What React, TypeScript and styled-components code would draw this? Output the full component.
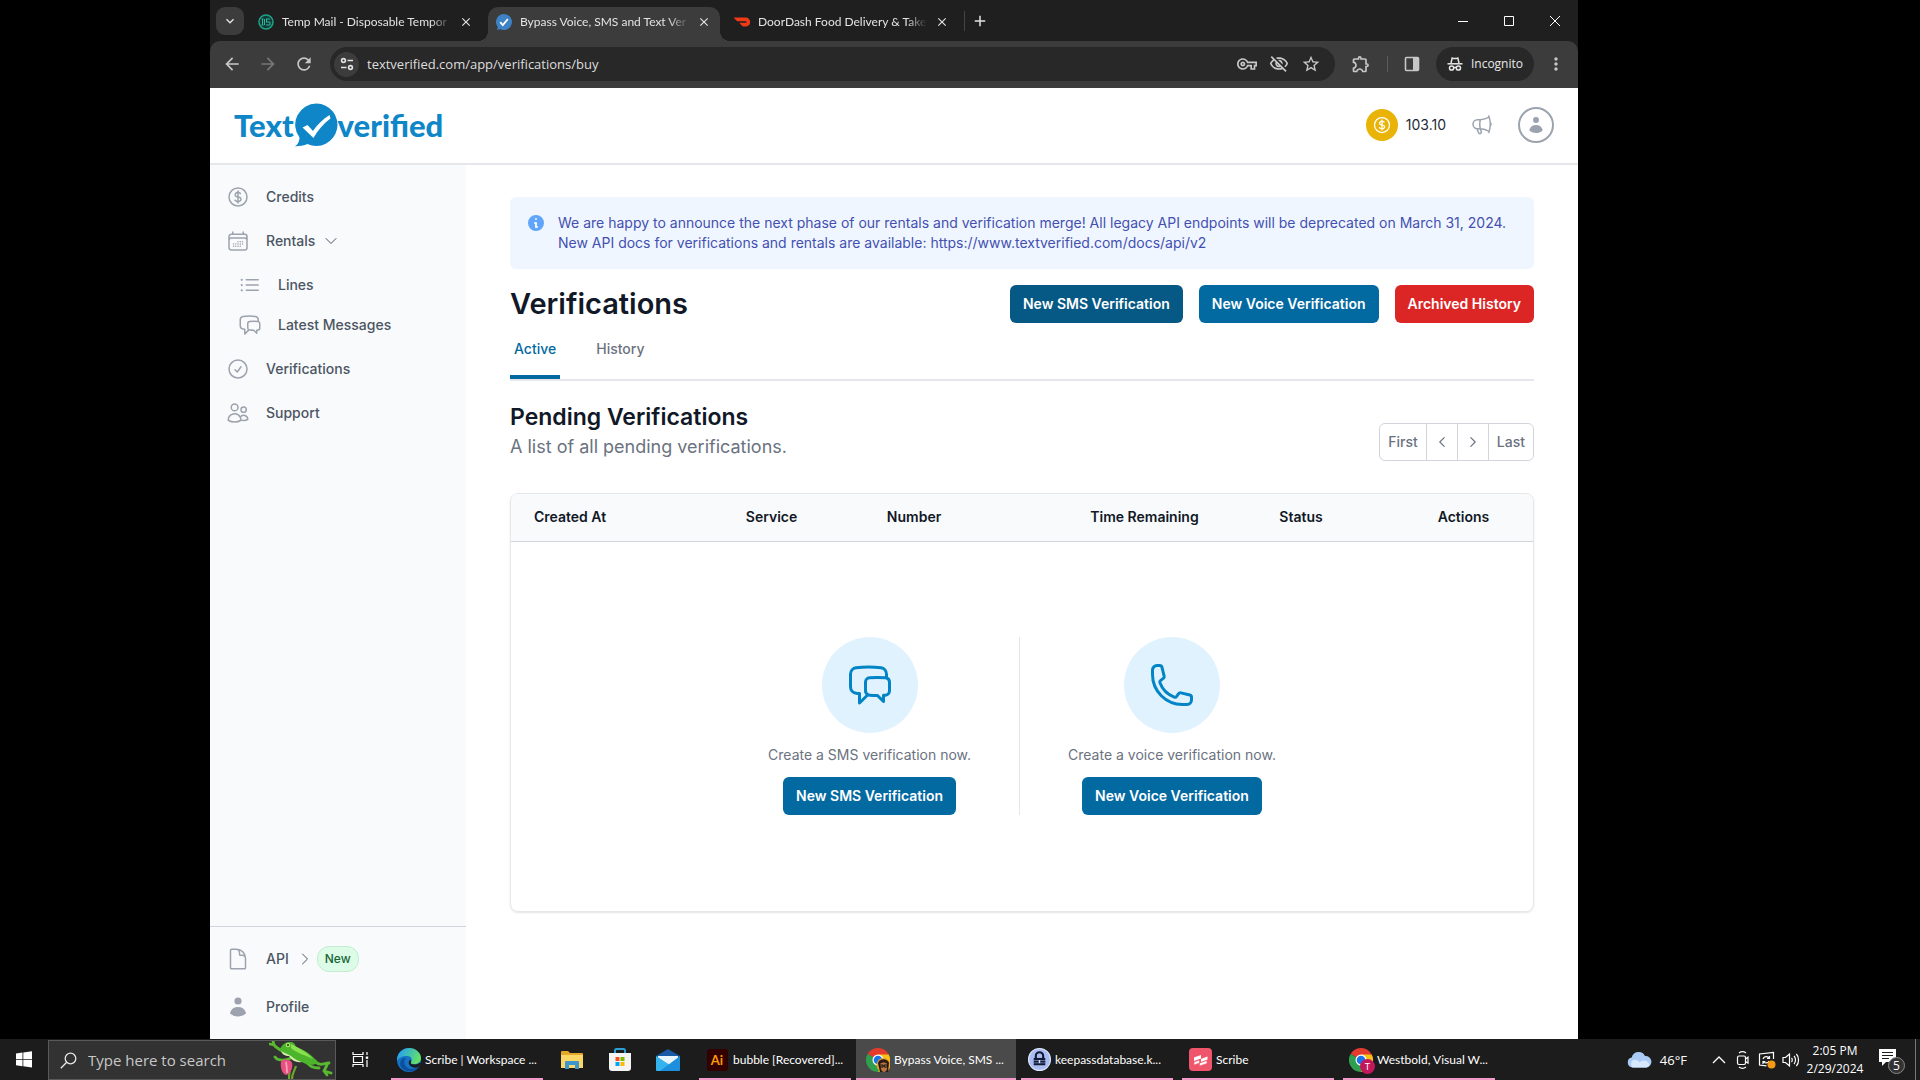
import React, { useState } from 'react';
import styled, { createGlobalStyle, css } from 'styled-components';
import {
  HiOutlineCalendarDays,
  HiOutlineChatBubbleLeftRight,
  HiOutlineCheckCircle,
  HiOutlineChevronDown,
  HiOutlineChevronLeft,
  HiOutlineChevronRight,
  HiOutlineCurrencyDollar,
  HiOutlineDocument,
  HiOutlineListBullet,
  HiOutlineMegaphone,
  HiOutlinePhone,
  HiOutlineUsers,
} from 'react-icons/hi2';
import { HiInformationCircle } from 'react-icons/hi';
import {
  MdArrowBack,
  MdArrowForward,
  MdClose,
  MdAdd,
  MdKeyboardArrowDown,
  MdMoreVert,
  MdOutlineExtension,
  MdOutlineVisibilityOff,
  MdOutlineVpnKey,
  MdRefresh,
  MdStarBorder,
} from 'react-icons/md';

const GlobalStyle = createGlobalStyle`
  * {
    box-sizing: border-box;
  }
  body {
    margin: 0;
    background: #000;
    font-family: Inter, 'Liberation Sans', sans-serif;
    font-size: 14px;
    line-height: 20px;
  }
  button, input {
    font: inherit;
    color: inherit;
    margin: 0;
    padding: 0;
    border: 0;
    background: none;
  }
  button {
    cursor: pointer;
  }
  a {
    color: inherit;
    text-decoration: none;
  }
  h1, h2, p {
    margin: 0;
  }
  svg {
    display: block;
    flex-shrink: 0;
  }
`;

const Desktop = styled.div`
  min-height: 100vh;
  display: flex;
  flex-direction: column;
`;

const Screen = styled.div`
  flex: 1;
  display: flex;
  flex-direction: column;
  padding: 0 342px 0 210px;
`;

/* ---------- browser ---------- */

const BrowserTop = styled.div`
  background: #1f1f1f;
`;

const TabStrip = styled.div`
  height: 41px;
  display: flex;
  align-items: flex-end;
  color: #e3e3e3;
  font-family: Lato, 'Open Sans', sans-serif;
  font-size: 12px;
`;

const TabSearch = styled.button`
  width: 28px;
  height: 28px;
  margin: 0 6px;
  align-self: center;
  display: grid;
  place-items: center;
  border-radius: 9px;
  background: #3c3c3c;
`;

const BrowserTab = styled.div<{ $active?: boolean }>`
  position: relative;
  width: 232px;
  height: 34px;
  margin-right: 6px;
  padding: 0 9px 4px 8px;
  display: flex;
  align-items: center;
  gap: 8px;
  border-radius: 10px 10px 0 0;
  ${({ $active }) =>
    $active &&
    css`
      background: #3c3c3c;
      &::before,
      &::after {
        content: '';
        position: absolute;
        bottom: 0;
        width: 10px;
        height: 10px;
      }
      &::before {
        left: -10px;
        background: radial-gradient(circle at 0 0, transparent 10px, #3c3c3c 10px);
      }
      &::after {
        right: -10px;
        background: radial-gradient(circle at 100% 0, transparent 10px, #3c3c3c 10px);
      }
    `}
`;

const BrowserTabTitle = styled.span`
  flex: 1;
  white-space: nowrap;
  mask-image: linear-gradient(to right, #000 88%, transparent);
`;

const PlainButton = styled.button`
  display: grid;
  place-items: center;
`;

const NewTab = styled(PlainButton)`
  height: 20px;
  margin-bottom: 10px;
  padding-left: 6px;
  border-left: 1px solid #444;
`;

const WindowButtons = styled.div`
  margin-left: auto;
  height: 41px;
  display: flex;
  color: #fff;
  button {
    width: 46px;
  }
`;

const Toolbar = styled.div`
  height: 47px;
  display: flex;
  align-items: center;
  padding: 0 12px 1px;
  gap: 16px;
  border-radius: 10px 10px 0 0;
  background: #3c3c3c;
  color: #c7c7c7;
  font-family: 'Open Sans', 'Noto Sans', sans-serif;
`;

const Omnibox = styled.label`
  flex: 1;
  height: 34px;
  padding: 0 14px 0 4px;
  display: flex;
  align-items: center;
  gap: 12px;
  border-radius: 17px;
  background: #282828;
  input {
    flex: 1;
    min-width: 0;
    outline: none;
    color: #dedede;
    font-size: 13px;
  }
`;

const SiteInfo = styled.span`
  width: 25px;
  height: 25px;
  margin-right: -4px;
  display: grid;
  place-items: center;
  border-radius: 50%;
  background: #3c3c3c;
`;

const Separator = styled.span`
  width: 1px;
  height: 16px;
  background: #5c5c5c;
`;

const Incognito = styled.button`
  height: 34px;
  margin-right: -4px;
  padding: 0 11px;
  display: flex;
  align-items: center;
  gap: 8px;
  border-radius: 17px;
  background: #282828;
  color: #e8e8e8;
  font-size: 12px;
`;

/* ---------- site ---------- */

const Site = styled.div`
  flex: 1;
  display: flex;
  flex-direction: column;
  background: #fff;
`;

const SiteHeader = styled.header`
  height: 77px;
  padding: 0 24px 1px;
  display: flex;
  align-items: center;
  justify-content: space-between;
  border-bottom: 2px solid #e5e7eb;
`;

const Logo = styled.a`
  display: flex;
  align-items: center;
  color: #0e86c8;
  font-family: Lato, sans-serif;
  font-size: 31px;
  font-weight: 900;
  line-height: 44px;
`;

const HeaderActions = styled.div`
  display: flex;
  align-items: center;
  gap: 24px;
  color: #9ca3af;
`;

const Balance = styled.div`
  display: flex;
  align-items: center;
  gap: 8px;
  color: #1f2937;
`;

const Coin = styled.span`
  width: 32px;
  height: 32px;
  display: grid;
  place-items: center;
  border-radius: 50%;
  background: #eab308;
  color: #fff;
`;

const Avatar = styled.button`
  width: 36px;
  height: 36px;
  display: grid;
  place-items: center;
  border: 2px solid #9ca3af;
  border-radius: 50%;
`;

const SiteBody = styled.div`
  flex: 1;
  display: flex;
`;

const Sidebar = styled.nav`
  width: 256px;
  display: flex;
  flex-direction: column;
  justify-content: space-between;
  background: #f9fafb;
  color: #4b5563;
  font-weight: 500;
`;

const NavGroup = styled.div`
  display: flex;
  flex-direction: column;
  padding: 10px 16px;
`;

const NavFooter = styled(NavGroup)`
  padding: 8px 16px;
  border-top: 1px solid #d1d5db;
`;

const NavItem = styled.a<{ $nested?: boolean; $tall?: boolean }>`
  height: ${({ $nested, $tall }) => ($tall ? 48 : $nested ? 40 : 44)}px;
  padding-left: ${({ $nested }) => ($nested ? 12 : 0)}px;
  display: flex;
  align-items: center;
  gap: 16px;
  > svg {
    color: #9ca3af;
  }
`;

const NavSub = styled.div`
  padding: 2px 0;
`;

const NavLabel = styled.span`
  display: flex;
  align-items: center;
  gap: 4px;
  svg {
    margin-left: 4px;
  }
`;

const NewBadge = styled.span`
  padding: 1px 7px;
  border: 1px solid #c3ecd1;
  border-radius: 12px;
  background: #dcfce7;
  color: #166534;
  font-size: 12px;
  line-height: 22px;
`;

const Main = styled.main`
  flex: 1;
  min-width: 0;
  padding: 32px 44px;
`;

const Notice = styled.div`
  display: flex;
  gap: 12px;
  padding: 16px;
  border-radius: 6px;
  background: #eff6ff;
  color: #4450b0;
  > svg {
    color: #60a5fa;
  }
`;

const TitleRow = styled.div`
  display: flex;
  align-items: center;
  justify-content: space-between;
  padding-top: 16px;
`;

const Title = styled.h1`
  color: #111827;
  font-size: 29px;
  font-weight: 600;
  line-height: 36px;
`;

const ButtonRow = styled.div`
  display: flex;
  gap: 16px;
`;

const tones = {
  blue: '#0369a1',
  deep: '#075985',
  red: '#dc2626',
};

const ActionButton = styled.button<{ $tone?: keyof typeof tones }>`
  height: 38px;
  padding: 0 13px;
  border-radius: 6px;
  background: ${({ $tone = 'blue' }) => tones[$tone]};
  color: #fff;
  font-weight: 600;
  white-space: nowrap;
`;

const Tabs = styled.div`
  display: flex;
  gap: 32px;
  border-bottom: 2px solid #e5e7eb;
`;

const Tab = styled.button<{ $active: boolean }>`
  height: 56px;
  padding: 0 4px;
  border-bottom: 4px solid transparent;
  color: #6b7280;
  font-weight: 500;
  ${({ $active }) =>
    $active &&
    css`
      border-color: #0369a1;
      color: #0369a1;
    `}
`;

const SectionHead = styled.div`
  display: flex;
  align-items: flex-end;
  justify-content: space-between;
  padding: 20px 0 32px;
`;

const SectionTitle = styled.h2`
  color: #111827;
  font-size: 23px;
  font-weight: 600;
  line-height: 32px;
`;

const SectionText = styled.p`
  color: #6b7280;
  font-size: 18px;
  line-height: 28px;
`;

const Pager = styled.div`
  display: flex;
  height: 38px;
  border: 1px solid #d1d5db;
  border-radius: 6px;
  color: #6b7280;
  font-weight: 500;
  button {
    display: grid;
    place-items: center;
    padding: 0 8px;
  }
  button + button {
    border-left: 1px solid #d1d5db;
  }
`;

const TableCard = styled.div`
  overflow: hidden;
  border: 1px solid #e5e7eb;
  border-radius: 8px;
  box-shadow: 0 1px 2px rgba(0, 0, 0, 0.1);
`;

const Table = styled.table`
  width: 100%;
  table-layout: fixed;
  border-collapse: collapse;
`;

const HeadCell = styled.th<{ $width?: string }>`
  width: ${({ $width = 'auto' }) => $width};
  height: 47px;
  padding: 0 10px;
  border-bottom: 1px solid #d1d5db;
  background: #f9fafb;
  color: #111827;
  font-weight: 600;
  text-align: left;
  &:first-child {
    padding-left: 23px;
  }
`;

const EmptyCell = styled.td`
  height: 370px;
  padding: 0;
`;

const EmptyState = styled.div`
  display: flex;
  justify-content: center;
`;

const EmptyOption = styled.div`
  padding: 0 48px;
  display: flex;
  flex-direction: column;
  align-items: center;
  gap: 12px;
  color: #6b7280;
  & + & {
    border-left: 1px solid #e5e7eb;
  }
`;

const IconDisc = styled.div`
  width: 96px;
  height: 96px;
  display: grid;
  place-items: center;
  border-radius: 50%;
  background: #e0f2fe;
  color: #0284c7;
`;

/* ---------- taskbar ---------- */

const Taskbar = styled.footer`
  height: 41px;
  display: flex;
  align-items: stretch;
  background: #1c1c1c;
  color: #fff;
  font-family: 'Open Sans', 'Noto Sans', sans-serif;
  font-size: 12px;
`;

const TaskIcon = styled.button<{ $width?: number }>`
  width: ${({ $width = 48 }) => $width}px;
  display: grid;
  place-items: center;
`;

const TaskSearch = styled.label`
  width: 288px;
  margin-top: 1px;
  padding-left: 11px;
  display: flex;
  align-items: center;
  gap: 11px;
  border: 1px solid #5a5a5a;
  background: #323232;
  input {
    flex: 1;
    min-width: 0;
    outline: none;
    font-size: 15px;
  }
  input::placeholder {
    color: #c8c8c8;
    opacity: 1;
  }
`;

const TaskApps = styled.div`
  display: flex;
  margin-left: 7px;
  margin-right: auto;
  font-family: Lato, 'Open Sans', sans-serif;
`;

const TaskApp = styled.button<{ $active?: boolean }>`
  width: ${({ $active }) => ($active ? 160 : 152)}px;
  margin: ${({ $active }) => ($active ? '0 5px 0 -4px' : '0 9px 0 0')};
  padding: 2px 0 0 ${({ $active }) => ($active ? 10 : 6)}px;
  display: grid;
  grid-template-columns: 24px 1fr;
  align-items: center;
  gap: 4px;
  border-bottom: 2px solid #f29bcb;
  background: ${({ $active }) => ($active ? '#4a4a4a' : 'transparent')};
  text-align: left;
  white-space: nowrap;
  > svg, > b {
    justify-self: center;
  }
`;

const PinnedApps = styled.div`
  display: flex;
  margin: 0 7px 0 -4px;
`;

const Tray = styled.div`
  display: flex;
  align-items: center;
`;

const Weather = styled.button`
  display: flex;
  align-items: center;
  gap: 8px;
  margin-right: 20px;
  font-size: 13px;
`;

const Clock = styled.div`
  width: 64px;
  text-align: center;
  line-height: 18px;
`;

const ShowDesktop = styled.button`
  align-self: stretch;
  width: 5px;
  border-left: 1px solid #777;
`;

/* ---------- drawings ---------- */

const LogoMark = () => (
  <svg width="44" height="44" viewBox="0 0 44 44">
    <path
      d="M22.5.5a21.2 21.2 0 1 1-9 40.5C10.500 42.5 5 43 1 43.5 4.500 41 5.500 37.5 5.500 34.5A21.200 21.200 0 0 1 22.5.5z"
      fill="#0e86c8"
    />
    <path d="M8.500 24.500l5-2.500 5.500 6C23 22 28.500 16.500 35.500 12l1 3.500C29.500 20.500 24 27 19.500 35z" fill="#fff" />
  </svg>
);

const UserIcon = ({ size }: { size: number }) => (
  <svg width={size} height={size} viewBox="0 0 20 20" fill="currentColor">
    <path d="M10 8a3 3 0 1 0 0-6 3 3 0 0 0 0 6zM3.465 14.493a1.230 1.230 0 0 0 .41 1.412A9.957 9.957 0 0 0 10 18c2.310 0 4.438-.784 6.131-2.100.43-.333.604-.903.408-1.410a7.002 7.002 0 0 0-13.074.003z" />
  </svg>
);

const TempMailIcon = () => (
  <svg width="16" height="16" viewBox="0 0 16 16">
    <circle cx="8" cy="8" r="7" fill="#123b38" stroke="#1fa387" strokeWidth="1.5" />
    <path d="M4.5 5v6M3.5 5h2M3.500 11h2M6.500 5v6M8 5h4M8 8h4M8 11h4M12 8v3M8.500 5v3" stroke="#2db598" fill="none" />
  </svg>
);

const VerifiedIcon = () => (
  <svg width="16" height="16" viewBox="0 0 16 16">
    <path d="M8 0a8 8 0 1 1-3.500 15.200L.8 15.800 1.800 13A8 8 0 0 1 8 0z" fill="#3c82c4" />
    <path d="M4.200 8.200l2.600 3 5-6" stroke="#fff" strokeWidth="1.8" fill="none" />
  </svg>
);

const DoorDashIcon = () => (
  <svg width="16" height="16" viewBox="0 0 24 24">
    <path
      d="M23.100 8.500A5.700 5.700 0 0 0 18 5.400H.6a.6.600 0 0 0-.4 1L4 10.200c.3.300.8.500 1.300.5h12.200a1.300 1.300 0 1 1 0 2.600H9.100a.6.600 0 0 0-.4 1l3.800 3.800c.3.300.8.500 1.200.5h3.900c5 0 8.800-5.200 5.500-10.100"
      fill="#f03a17"
    />
  </svg>
);

const TuneIcon = () => (
  <svg width="16" height="16" viewBox="0 0 16 16" fill="none" stroke="#e3e3e3" strokeWidth="1.6">
    <circle cx="4.5" cy="4.5" r="1.9" />
    <path d="M8.500 4.500h5.500M2 11.500h5.500" />
    <circle cx="11.5" cy="11.5" r="1.9" />
  </svg>
);

const SidePanelIcon = () => (
  <svg width="16" height="16" viewBox="0 0 16 16">
    <rect x="1.5" y="1.5" width="13" height="13" rx="1" fill="none" stroke="#c7c7c7" strokeWidth="1.6" />
    <path d="M9 1.500h5.500v13H9z" fill="#c7c7c7" />
  </svg>
);

const IncognitoIcon = () => (
  <svg width="16" height="16" viewBox="0 0 16 16" fill="none" stroke="#e8e8e8" strokeWidth="1.5">
    <path d="M4 7l1.200-5 1.600.6h2.400l1.600-.6L12 7" />
    <path d="M.5 7.800h15" />
    <circle cx="4.6" cy="12" r="2.1" />
    <circle cx="11.4" cy="12" r="2.1" />
    <path d="M6.700 11.500h2.600" />
  </svg>
);

const MinimizeIcon = () => (
  <svg width="10" height="10" viewBox="0 0 10 10"><path d="M0 5.500h10" stroke="#fff" /></svg>
);

const MaximizeIcon = () => (
  <svg width="10" height="10" viewBox="0 0 10 10"><path d="M.5.5h9v9h-9z" stroke="#fff" fill="none" /></svg>
);

const CloseIcon = () => (
  <svg width="10" height="10" viewBox="0 0 10 10"><path d="M0 0l10 10M10 0L0 10" stroke="#fff" /></svg>
);

const WindowsIcon = () => (
  <svg width="16" height="17" viewBox="0 0 16 17" fill="#fff">
    <path d="M0 2.500L6.500 1.600V8H0zM7.300 1.500L16 .3V8H7.300zM0 8.800h6.500v6.400L0 14.300zM7.300 8.800H16v7.700l-8.700-1.200z" />
  </svg>
);

const SearchIcon = () => (
  <svg width="17" height="17" viewBox="0 0 17 17" fill="none" stroke="#e8e8e8" strokeWidth="1.3">
    <circle cx="10.5" cy="6.5" r="5.3" />
    <path d="M6.700 10.300L.8 16.200" />
  </svg>
);

const FrogIcon = () => (
  <svg width="66" height="38" viewBox="0 0 66 38">
    <path d="M20 38c0-6 1-9 1-12M23 38c0-6 3-9 4-13" stroke="#6fa52c" strokeWidth="2.2" fill="none" />
    <path
      d="M20 12C15 11 9 9 4 3M5 4L1 3M5 4L4 0M22 17c-4 2-9 3-14 1M8 18l-2-2M46 20c5 6 9 2 14 2M59 22l-4 8M55 30l7 2M55 30l3 4M36 20c6 6 8 7 14 7"
      stroke="#58b830"
      strokeWidth="2.8"
      fill="none"
      strokeLinecap="round"
      strokeLinejoin="round"
    />
    <path d="M12 21c1-3 5-3 7-2 4 0 5 4 4 8-1 4-4 7-6 7-4-1-6-8-5-13z" fill="#e8507f" />
    <path d="M17 21c1 5 1 8 1 11" stroke="#f9a0bb" strokeWidth="1.8" fill="none" />
    <path d="M11 8c2-4 5-7 10-7 4 0 5 2 6 5 7 2 17 8 22 16-5 3-11 2-16-1-5-1-9-2-13-7-4 0-8-2-9-6z" fill="#4db52b" />
    <path d="M22 3c8 4 16 8 22 15-8-4-17-6-22-11z" fill="#8be04f" />
    <path d="M12 10c3 2 7 3 10 5 3 3 7 5 11 6-5 1-10-1-13-6-4 0-7-2-8-5z" fill="#d5efb0" />
    <circle cx="19" cy="4" r="2.3" fill="#a8e667" />
    <circle cx="19" cy="4" r="1" fill="#1d3311" />
  </svg>
);

const TaskViewIcon = () => (
  <svg width="17" height="17" viewBox="0 0 17 17" fill="none" stroke="#fff" strokeWidth="1.2">
    <path d="M1 1v2.500h10V1M1 16v-2.500h10V16M1.500 5.500h9v6h-9zM15 1v3M15 9v7" />
    <path d="M13.800 5.500h2.400v2.400h-2.400z" fill="#fff" stroke="none" />
  </svg>
);

const EdgeIcon = () => (
  <svg width="24" height="24" viewBox="0 0 24 24">
    <defs>
      <linearGradient id="edgeTop" x1="0" y1="0" x2="1" y2="0.4">
        <stop offset="0.2" stopColor="#2aa6e8" />
        <stop offset="1" stopColor="#62df6a" />
      </linearGradient>
    </defs>
    <circle cx="12" cy="12" r="12" fill="#1473c8" />
    <path d="M0 11C1 4 6 0 12 0c7 0 12 5 12 10 0 4-3 6-7 6-3 0-4-1-3-2 2-3 0-6-4-6-5 0-9 2-10 5z" fill="url(#edgeTop)" />
    <path d="M9 10c-4 4-1 11 6 11 3 0 5-1 7-3-3 5-8 6-12 5C4 22 1 15 5 11c1-1 3-1 4-1z" fill="#0c4f9c" />
    <path d="M14 14c-1 1 0 2.500 3 2.500 2.500 0 4.500-.5 6-2l1 1-2.500 3.500c-5 2-11-1-9.500-6 .5-1.500 3-1 2 1z" fill="#1c1c1c" />
  </svg>
);

const ExplorerIcon = () => (
  <svg width="22" height="20" viewBox="0 0 22 20">
    <path d="M0 2a1 1 0 0 1 1-1h6l2 2h12a1 1 0 0 1 1 1v14H0z" fill="#e3a72a" />
    <path d="M0 5h22v12a1 1 0 0 1-1 1H1a1 1 0 0 1-1-1z" fill="#fbd768" />
    <path d="M4 19v-7a1 1 0 0 1 1-1h12a1 1 0 0 1 1 1v7h-4v-4H8v4z" fill="#3f96cf" />
  </svg>
);

const StoreIcon = () => (
  <svg width="24" height="24" viewBox="0 0 24 24">
    <path d="M7 6V2.500A1.500 1.500 0 0 1 8.500 1h7A1.500 1.500 0 0 1 17 2.500V6" fill="none" stroke="#2c9ed4" strokeWidth="2" />
    <path d="M1 5h22v15a3 3 0 0 1-3 3H4a3 3 0 0 1-3-3z" fill="#f4f4f4" />
    <path d="M7.500 9h4v4h-4z" fill="#f25022" />
    <path d="M12.500 9h4v4h-4z" fill="#7fba00" />
    <path d="M7.500 14h4v4h-4z" fill="#00a4ef" />
    <path d="M12.500 14h4v4h-4z" fill="#ffb900" />
  </svg>
);

const MailIcon = () => (
  <svg width="24" height="24" viewBox="0 0 24 24">
    <path d="M0 8l12-7 12 7v4H0z" fill="#175aa5" />
    <path d="M2 8h20v10H2z" fill="#e9f5fd" />
    <path d="M0 8l14 9-6 6H1a1 1 0 0 1-1-1z" fill="#35b3ee" />
    <path d="M24 8L4 23h19a1 1 0 0 0 1-1z" fill="#1d8fdc" />
  </svg>
);

const AiTile = styled.b`
  width: 21px;
  height: 22px;
  border-radius: 3px;
  background: #330000;
  color: #ff9a00;
  font-size: 13px;
  line-height: 22px;
  text-align: center;
`;

const BadgeIcon = styled.span`
  position: relative;
`;

const ProfileBadge = styled.i`
  position: absolute;
  right: -2px;
  bottom: -2px;
  width: 15px;
  height: 15px;
  border-radius: 50%;
  background: #c2185b;
  color: #fff;
  font-size: 9px;
  font-style: normal;
  line-height: 15px;
  text-align: center;
`;

const ChromeIcon = ({ face }: { face?: boolean }) => (
  <svg width="24" height="24" viewBox="0 0 24 24">
    <path d="M12 12L1.600 6A12 12 0 0 1 22.400 6z" fill="#e33b2e" />
    <path d="M12 12h10.400V6A12 12 0 0 1 12 24z" fill="#fbc116" />
    <path d="M1.600 6A12 12 0 0 0 12 24l5.200-9L12 12z" fill="#2f9e4f" />
    <path d="M12 6.500h10.600L24 12H12z" fill="#fbc116" />
    <circle cx="12" cy="12" r="5.5" fill="#fff" />
    <circle cx="12" cy="12" r="4.3" fill="#1a73e8" />
    {face && (
      <g>
        <circle cx="17.5" cy="17" r="7" fill="#e9a321" />
        <path d="M12 15c1-5 10-5 11 0l-1 9h-8z" fill="#2b1a18" />
        <path d="M14 16c2-2 6-2 7 0v5c-1 4-5 4-6 0z" fill="#b9743f" />
        <path d="M13.500 17h3.500v2h-3.500zM18 17h3.500v2H18z" fill="none" stroke="#111" />
      </g>
    )}
  </svg>
);

const KeepassIcon = () => (
  <svg width="23" height="23" viewBox="0 0 22 22">
    <circle cx="11" cy="11" r="10.5" fill="#a9bdf2" stroke="#dfe7ff" />
    <path d="M7.500 10V7.500a3.500 3.500 0 0 1 7 0V10" fill="none" stroke="#111a33" strokeWidth="2" />
    <path d="M5.500 9.500h11v7h-11z" fill="#111a33" />
    <path d="M5.500 12h11M5.500 14.200h11" stroke="#7f93cf" strokeWidth=".7" />
    <path d="M10.300 11.500h1.400v3h-1.400z" fill="#dfe7ff" />
  </svg>
);

const ScribeIcon = () => (
  <svg width="23" height="23" viewBox="0 0 23 23">
    <rect width="23" height="23" rx="4" fill="#f0566b" />
    <path d="M5 9.500l7-2.500v4l6.500-2.500v3L12 14v-3.500L5 13z" fill="#fff" />
    <path d="M5 14l5.500-2v3.200l7.500-2.700v3L10.500 18v-3L5 17z" fill="#fff" stroke="#f0566b" strokeWidth=".6" />
  </svg>
);

const CloudIcon = () => (
  <svg width="25" height="17" viewBox="0 0 25 17">
    <path d="M5.500 16.500a5 5 0 0 1-.7-9.900A7 7 0 0 1 18 5a5.800 5.800 0 0 1 1.500 11.500z" fill="#a9cbf5" />
    <path d="M5.500 16.500a5 5 0 0 1 0-7c3-2 6 0 7 2 3-3 8-3 10 2-.6 2-2 3-3 3z" fill="#d7e8fc" />
  </svg>
);

const TrayChevron = () => (
  <svg width="14" height="8" viewBox="0 0 14 8"><path d="M1 7l6-6 6 6" stroke="#fff" strokeWidth="1.3" fill="none" /></svg>
);

const MeetIcon = () => (
  <svg width="14" height="18" viewBox="0 0 14 18" fill="none" stroke="#fff" strokeWidth="1.2">
    <rect x="1.5" y="5" width="8" height="8.5" rx="1.5" />
    <path d="M9.500 8l2.500-1.800v6L9.500 10.500M3 2c2-1.500 5-1.500 7 0M3 16c2 1.500 5 1.500 7 0" />
  </svg>
);

const UpdateIcon = () => (
  <svg width="18" height="18" viewBox="0 0 18 18" fill="none" stroke="#fff" strokeWidth="1.2">
    <path d="M15.500 8V1.500L1.500 3v11l7 .8" />
    <path d="M5 8c1-3 5-3 6.500-.5M11.500 5v2.500H9M11 10c-1 2.500-4.500 2.500-6 .5M5 13v-2.500h2.300" />
    <circle cx="13.5" cy="13.5" r="4" fill="#f59a14" stroke="none" />
  </svg>
);

const SpeakerIcon = () => (
  <svg width="18" height="16" viewBox="0 0 18 16" fill="none" stroke="#fff" strokeWidth="1.2">
    <path d="M1 5.500h2.500L7.500 2v12l-4-3.500H1zM9.500 6c1 1 1 3 0 4M12 4c2 2 2 6 0 8M14.300 2c3 3 3 9 0 12" />
  </svg>
);

const NotificationIcon = () => (
  <svg width="28" height="24" viewBox="0 0 28 24">
    <path d="M2 1h17v13H9l-4 4v-4H2z" fill="#fff" />
    <path d="M5 4.500h11M5 7.500h11M5 10.500h7" stroke="#1c1c1c" strokeWidth="1.2" />
  </svg>
);

const CountBadge = styled.i`
  position: absolute;
  right: 0;
  bottom: -2px;
  width: 17px;
  height: 17px;
  border: 1px solid #8a8a8a;
  border-radius: 50%;
  background: #333;
  font-size: 12px;
  font-style: normal;
  line-height: 15px;
  text-align: center;
`;

const browserTabs = [
  { title: 'Temp Mail - Disposable Tempor', icon: <TempMailIcon /> },
  { title: 'Bypass Voice, SMS and Text Ver', icon: <VerifiedIcon />, active: true },
  { title: 'DoorDash Food Delivery & Take', icon: <DoorDashIcon /> },
];

const columns = [
  { label: 'Created At', width: '22%' },
  { label: 'Service', width: '13.8%' },
  { label: 'Number', width: '19.9%' },
  { label: 'Time Remaining', width: '18.5%' },
  { label: 'Status', width: '15.5%' },
  { label: 'Actions' },
];

const announcement =
  'We are happy to announce the next phase of our rentals and verification merge! All legacy API endpoints will be deprecated on March 31, 2024. New API docs for verifications and rentals are available: https://www.textverified.com/docs/api/v2';

const BrowserChrome: React.FC = () => {
  const [url, setUrl] = useState('textverified.com/app/verifications/buy');

  return (
    <BrowserTop>
      <TabStrip>
        <TabSearch aria-label="Search tabs"><MdKeyboardArrowDown size={16} /></TabSearch>
        {browserTabs.map((tab) => (
          <BrowserTab key={tab.title} $active={tab.active}>
            {tab.icon}
            <BrowserTabTitle>{tab.title}</BrowserTabTitle>
            <PlainButton aria-label="Close tab"><MdClose size={14} /></PlainButton>
          </BrowserTab>
        ))}
        <NewTab aria-label="New tab"><MdAdd size={18} /></NewTab>
        <WindowButtons>
          <PlainButton aria-label="Minimize"><MinimizeIcon /></PlainButton>
          <PlainButton aria-label="Maximize"><MaximizeIcon /></PlainButton>
          <PlainButton aria-label="Close"><CloseIcon /></PlainButton>
        </WindowButtons>
      </TabStrip>
      <Toolbar>
        <PlainButton aria-label="Back"><MdArrowBack size={20} /></PlainButton>
        <PlainButton aria-label="Forward"><MdArrowForward size={20} color="#777" /></PlainButton>
        <PlainButton aria-label="Reload"><MdRefresh size={20} /></PlainButton>
        <Omnibox>
          <SiteInfo><TuneIcon /></SiteInfo>
          <input aria-label="Address" value={url} onChange={(e) => setUrl(e.target.value)} />
          <MdOutlineVpnKey size={20} />
          <MdOutlineVisibilityOff size={20} />
          <MdStarBorder size={20} />
        </Omnibox>
        <PlainButton aria-label="Extensions"><MdOutlineExtension size={20} /></PlainButton>
        <Separator />
        <PlainButton aria-label="Side panel"><SidePanelIcon /></PlainButton>
        <Incognito><IncognitoIcon />Incognito</Incognito>
        <PlainButton aria-label="Menu"><MdMoreVert size={20} /></PlainButton>
      </Toolbar>
    </BrowserTop>
  );
};

const SideNav: React.FC = () => (
  <Sidebar>
    <NavGroup>
      <NavItem href="#"><HiOutlineCurrencyDollar size={24} />Credits</NavItem>
      <NavItem href="#">
        <HiOutlineCalendarDays size={24} />
        <NavLabel>Rentals <HiOutlineChevronDown size={16} /></NavLabel>
      </NavItem>
      <NavSub>
        <NavItem href="#" $nested><HiOutlineListBullet size={24} />Lines</NavItem>
        <NavItem href="#" $nested><HiOutlineChatBubbleLeftRight size={24} />Latest Messages</NavItem>
      </NavSub>
      <NavItem href="#"><HiOutlineCheckCircle size={24} />Verifications</NavItem>
      <NavItem href="#"><HiOutlineUsers size={24} />Support</NavItem>
    </NavGroup>
    <NavFooter>
      <NavItem href="#" $tall>
        <HiOutlineDocument size={24} />
        <NavLabel>API <HiOutlineChevronRight size={16} /><NewBadge>New</NewBadge></NavLabel>
      </NavItem>
      <NavItem href="#" $tall><UserIcon size={24} />Profile</NavItem>
    </NavFooter>
  </Sidebar>
);

const VerificationsPage: React.FC = () => {
  const [tab, setTab] = useState('Active');

  return (
    <Main>
      <Notice>
        <HiInformationCircle size={20} />
        <p>{announcement}</p>
      </Notice>

      <TitleRow>
        <Title>Verifications</Title>
        <ButtonRow>
          <ActionButton $tone="deep">New SMS Verification</ActionButton>
          <ActionButton>New Voice Verification</ActionButton>
          <ActionButton $tone="red">Archived History</ActionButton>
        </ButtonRow>
      </TitleRow>

      <Tabs>
        {['Active', 'History'].map((name) => (
          <Tab key={name} $active={tab === name} onClick={() => setTab(name)}>{name}</Tab>
        ))}
      </Tabs>

      <SectionHead>
        <div>
          <SectionTitle>Pending Verifications</SectionTitle>
          <SectionText>A list of all pending verifications.</SectionText>
        </div>
        <Pager>
          <button>First</button>
          <button aria-label="Previous"><HiOutlineChevronLeft size={14} strokeWidth={2} /></button>
          <button aria-label="Next"><HiOutlineChevronRight size={14} strokeWidth={2} /></button>
          <button>Last</button>
        </Pager>
      </SectionHead>

      <TableCard>
        <Table>
          <thead>
            <tr>
              {columns.map((column) => (
                <HeadCell key={column.label} $width={column.width}>{column.label}</HeadCell>
              ))}
            </tr>
          </thead>
          <tbody>
            <tr>
              <EmptyCell colSpan={columns.length}>
                <EmptyState>
                  <EmptyOption>
                    <IconDisc><HiOutlineChatBubbleLeftRight size={48} /></IconDisc>
                    <p>Create a SMS verification now.</p>
                    <ActionButton>New SMS Verification</ActionButton>
                  </EmptyOption>
                  <EmptyOption>
                    <IconDisc><HiOutlinePhone size={48} /></IconDisc>
                    <p>Create a voice verification now.</p>
                    <ActionButton>New Voice Verification</ActionButton>
                  </EmptyOption>
                </EmptyState>
              </EmptyCell>
            </tr>
          </tbody>
        </Table>
      </TableCard>
    </Main>
  );
};

const WindowsTaskbar: React.FC = () => (
  <Taskbar>
    <TaskIcon aria-label="Start"><WindowsIcon /></TaskIcon>
    <TaskSearch>
      <SearchIcon />
      <input aria-label="Search" placeholder="Type here to search" />
      <FrogIcon />
    </TaskSearch>
    <TaskIcon aria-label="Task view"><TaskViewIcon /></TaskIcon>
    <TaskApps>
      <TaskApp><EdgeIcon /><span>Scribe | Workspace ...</span></TaskApp>
      <PinnedApps>
        <TaskIcon aria-label="File Explorer"><ExplorerIcon /></TaskIcon>
        <TaskIcon aria-label="Store"><StoreIcon /></TaskIcon>
        <TaskIcon aria-label="Mail"><MailIcon /></TaskIcon>
      </PinnedApps>
      <TaskApp><AiTile>Ai</AiTile><span>bubble [Recovered]...</span></TaskApp>
      <TaskApp $active><ChromeIcon face /><span>Bypass Voice, SMS ...</span></TaskApp>
      <TaskApp><KeepassIcon /><span>keepassdatabase.k...</span></TaskApp>
      <TaskApp><ScribeIcon /><span>Scribe</span></TaskApp>
      <TaskApp>
        <BadgeIcon><ChromeIcon /><ProfileBadge>T</ProfileBadge></BadgeIcon>
        <span>Westbold, Visual W...</span>
      </TaskApp>
    </TaskApps>
    <Tray>
      <Weather><CloudIcon />46°F</Weather>
      <TaskIcon $width={24} aria-label="Show hidden icons"><TrayChevron /></TaskIcon>
      <TaskIcon $width={24} aria-label="Meet now"><MeetIcon /></TaskIcon>
      <TaskIcon $width={24} aria-label="Updates"><UpdateIcon /></TaskIcon>
      <TaskIcon $width={24} aria-label="Volume"><SpeakerIcon /></TaskIcon>
      <Clock>2:05 PM<br />2/29/2024</Clock>
      <TaskIcon aria-label="Notifications">
        <BadgeIcon><NotificationIcon /><CountBadge>5</CountBadge></BadgeIcon>
      </TaskIcon>
      <ShowDesktop aria-label="Show desktop" />
    </Tray>
  </Taskbar>
);

const App: React.FC = () => (
  <Desktop>
    <GlobalStyle />
    <Screen>
      <BrowserChrome />
      <Site>
        <SiteHeader>
          <Logo href="#">Text<LogoMark />verified</Logo>
          <HeaderActions>
            <Balance>
              <Coin><HiOutlineCurrencyDollar size={20} /></Coin>
              103.10
            </Balance>
            <PlainButton aria-label="Announcements"><HiOutlineMegaphone size={24} /></PlainButton>
            <Avatar aria-label="Account"><UserIcon size={20} /></Avatar>
          </HeaderActions>
        </SiteHeader>
        <SiteBody>
          <SideNav />
          <VerificationsPage />
        </SiteBody>
      </Site>
    </Screen>
    <WindowsTaskbar />
  </Desktop>
);

export default App;
